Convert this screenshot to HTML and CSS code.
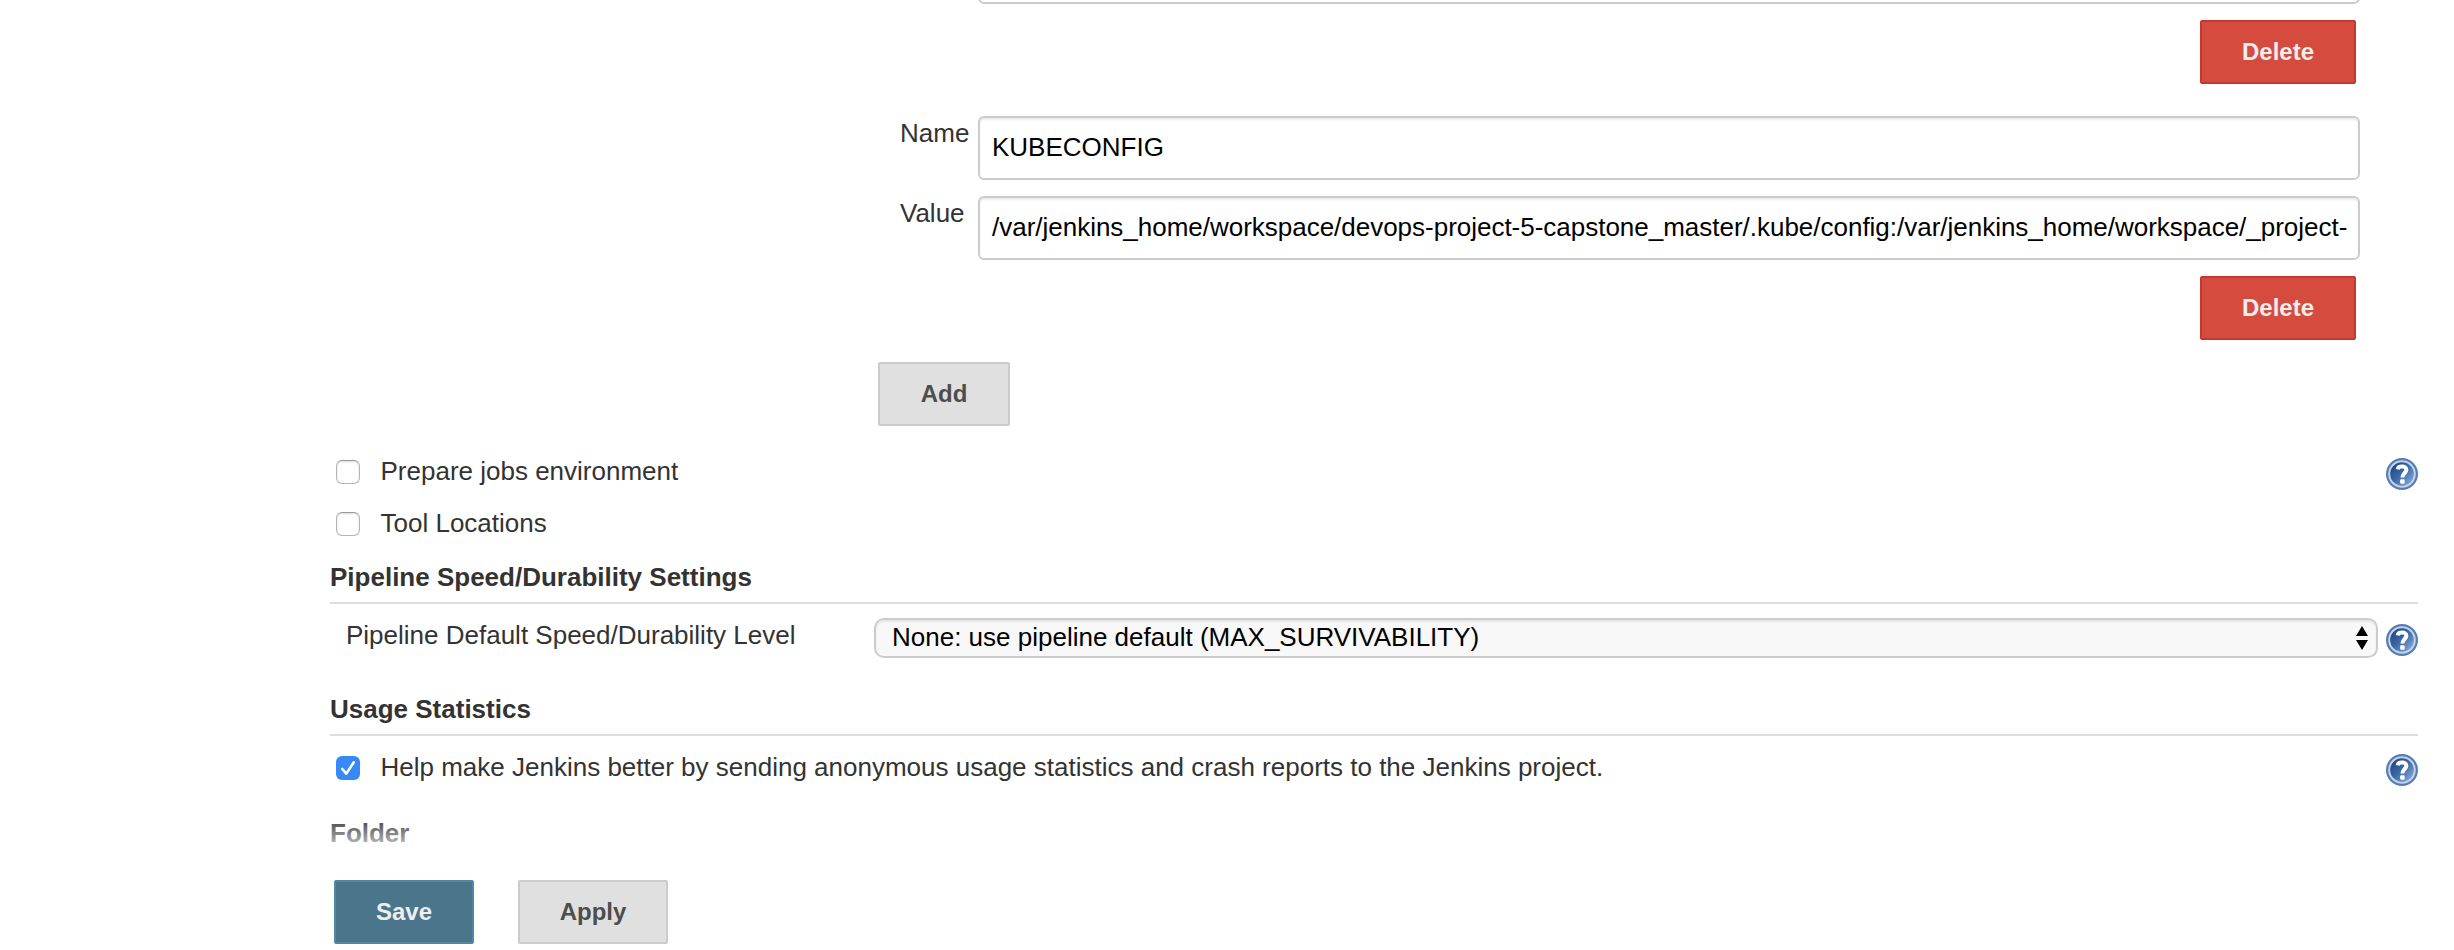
FILE: index.html
```
<!DOCTYPE html>
<html lang="en">
<head>
<meta charset="utf-8">
<title>Configure System [Jenkins]</title>
<link rel="stylesheet" href="styles.css">
</head>
<body>
<svg class="defs" width="0" height="0" aria-hidden="true">
  <defs>
    <linearGradient id="help-fill" x1="0" y1="0" x2="1" y2="1">
      <stop offset="0.15" stop-color="#1f4887"/>
      <stop offset="0.5" stop-color="#3f6ba8"/>
      <stop offset="0.9" stop-color="#86abd8"/>
    </linearGradient>
    <symbol id="help" viewBox="0 0 32 32">
      <circle cx="16" cy="16" r="16" fill="#557db4"/>
      <circle cx="16" cy="16" r="12.8" fill="url(#help-fill)" stroke="#c3d2e7" stroke-width="2"/>
      <path d="M11.6 11.4C12.4 7.4 20.4 7.6 20.4 11.8C20.4 15 16.4 15.2 16.4 19.6" fill="none" stroke="#fff" stroke-width="4"/>
      <rect x="14.2" y="21.2" width="4.4" height="4.6" rx="1" fill="#fff"/>
    </symbol>
  </defs>
</svg>
<main class="config">
  <section class="env">
    <div class="field field-cut"><span class="label"></span><div class="input"></div></div>
    <div class="actions"><button class="btn danger">Delete</button></div>
    <div class="field field-name"><span class="label">Name</span><div class="input">KUBECONFIG</div></div>
    <div class="field"><span class="label">Value</span><div class="input path">/var/jenkins_home/workspace/devops-project-5-capstone_master/.kube/config:/var/jenkins_home/workspace/_project-</div></div>
    <div class="actions"><button class="btn danger">Delete</button></div>
    <button class="btn add">Add</button>
  </section>

  <div class="option option-first">
    <span class="check"></span><span class="text">Prepare jobs environment</span>
    <svg class="help"><use href="#help"/></svg>
  </div>
  <div class="option"><span class="check"></span><span class="text">Tool Locations</span></div>

  <h2 class="heading">Pipeline Speed/Durability Settings</h2>
  <div class="setting">
    <span class="setting-label">Pipeline Default Speed/Durability Level</span>
    <div class="select">
      <span>None: use pipeline default (MAX_SURVIVABILITY)</span>
      <svg class="arrows" viewBox="0 0 12 24"><path d="M0 10L6 0L12 10ZM0 14H12L6 24Z"/></svg>
    </div>
    <svg class="help"><use href="#help"/></svg>
  </div>

  <h2 class="heading">Usage Statistics</h2>
  <div class="option option-usage">
    <span class="check checked"><svg viewBox="0 0 24 24"><path d="M6.3 13L10.3 17.6L17.8 6.3"/></svg></span>
    <span class="text">Help make Jenkins better by sending anonymous usage statistics and crash reports to the Jenkins project.</span>
    <svg class="help"><use href="#help"/></svg>
  </div>

  <h2 class="heading heading-last">Folder</h2>
  <footer class="bottom">
    <button class="btn primary">Save</button>
    <button class="btn">Apply</button>
  </footer>
</main>
</body>
</html>
```

FILE: styles.css
```
* { box-sizing: border-box; }
body {
  margin: 0;
  background: #fff;
  color: #333;
  font: 26px/30px "Liberation Sans", Arial, sans-serif;
}
.defs { display: block; }
.config {
  position: relative;
  display: flex;
  flex-direction: column;
  width: 2454px;
  height: 950px;
  padding: 0 36px 0 330px;
  overflow: hidden;
}
.env {
  display: flex;
  flex-direction: column;
  height: 426px;
  flex: none;
  padding: 0 58px 0 548px;
}
.field { display: flex; flex: none; height: 64px; margin-bottom: 16px; }
.field-cut { margin-top: -60px; }
.field-name { margin-top: 32px; }
.label { width: 100px; padding: 2px 0 0 22px; flex: none; }
.input {
  flex: 1;
  min-width: 0;
  padding: 14px 12px;
  border: 2px solid #ccc;
  border-radius: 6px;
  box-shadow: inset 0 2px 2px rgba(0, 0, 0, 0.075);
  color: #000;
  white-space: nowrap;
  overflow: hidden;
}
.path { letter-spacing: -0.015px; }
.actions { display: flex; justify-content: flex-end; padding-right: 4px; }
.btn {
  height: 64px;
  width: 150px;
  padding: 0;
  border: 2px solid #ccc;
  border-radius: 2px;
  background: #e0e0e0;
  color: #4d4d4d;
  font: bold 24px/30px "Liberation Sans", Arial, sans-serif;
}
.danger { width: 156px; background: #d54c3f; border-color: #c23a2e; color: #eee; }
.add { width: 132px; margin-top: 22px; flex: none; }
.primary { width: 140px; background: #4b758b; border-color: #5188a1; color: #eee; }
.option {
  display: flex;
  flex: none;
  align-items: flex-start;
  height: 52px;
  padding-left: 6px;
}
.option-first { margin-top: 30px; }
.check {
  width: 24px;
  height: 24px;
  margin: 4px 20.5px 0 0;
  flex: none;
  border: 1px solid #b4b4b4;
  border-top-color: #999;
  border-radius: 6px;
  background: #fff;
  box-shadow: inset 0 1px 2px rgba(0, 0, 0, 0.15);
}
.checked { border: 0; background: #3789f7; box-shadow: none; }
.checked svg {
  display: block;
  fill: none;
  stroke: #fff;
  stroke-width: 2.6;
  stroke-linecap: round;
  stroke-linejoin: round;
}
.help { width: 32px; height: 32px; flex: none; margin: 2px 0 0 auto; }
.heading {
  flex: none;
  height: 42px;
  margin: 0;
  border-bottom: 2px solid #ddd;
  font-size: 26px;
  line-height: 30px;
}
.option + .heading { margin-top: 2px; }
.heading-last { border-bottom: 0; }
.setting { display: flex; flex: none; height: 90px; padding: 14px 0 0 16px; }
.setting-label { width: 528px; padding-top: 2px; }
.select {
  display: flex;
  justify-content: space-between;
  flex: 1;
  height: 40px;
  padding: 2px 8px 0 16px;
  border: 2px solid #ccc;
  border-radius: 10px;
  background: #f8f8f8;
  box-shadow: inset 0 2px 2px rgba(0, 0, 0, 0.075);
  color: #000;
}
.arrows { width: 12px; height: 24px; margin-top: 4px; }
.setting .help { margin: 6px 0 0 8px; }
.option-usage { height: 66px; padding-top: 16px; }
.option.option-usage + .heading { margin-top: 16px; }
.bottom {
  position: absolute;
  left: 0;
  right: 0;
  bottom: 0;
  display: flex;
  gap: 44px;
  height: 134px;
  padding: 64px 0 0 334px;
  background: linear-gradient(rgba(255, 255, 255, 0), #fff 43px);
}
```
